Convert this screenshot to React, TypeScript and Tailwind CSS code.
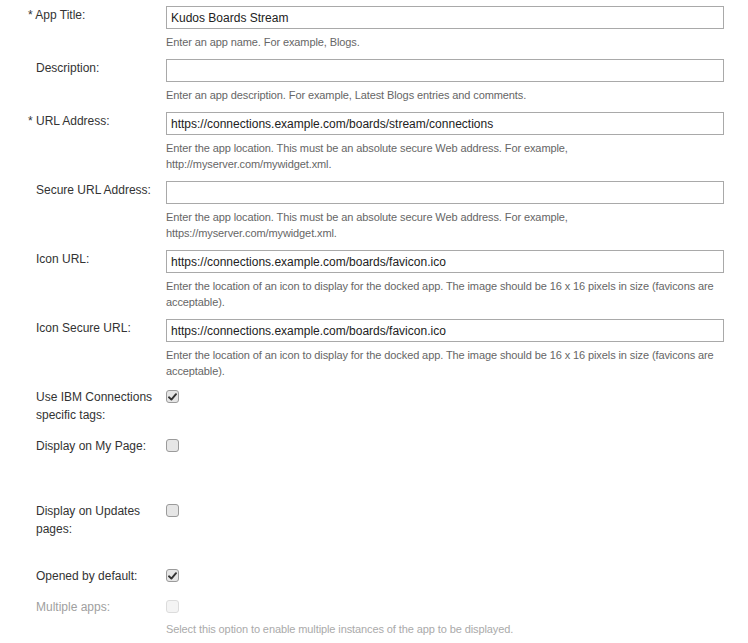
const font = "font-['Liberation_Sans',Arial,Helvetica,sans-serif]";

type Field = {
  label: string;
  required?: boolean;
  value: string;
  help: string[];
};

const fields: Field[] = [
  { label: 'App Title:', required: true, value: 'Kudos Boards Stream', help: ['Enter an app name. For example, Blogs.'] },
  { label: 'Description:', value: '', help: ['Enter an app description. For example, Latest Blogs entries and comments.'] },
  {
    label: 'URL Address:',
    required: true,
    value: 'https://connections.example.com/boards/stream/connections',
    help: ['Enter the app location. This must be an absolute secure Web address. For example,', 'http://myserver.com/mywidget.xml.'],
  },
  {
    label: 'Secure URL Address:',
    value: '',
    help: ['Enter the app location. This must be an absolute secure Web address. For example,', 'https://myserver.com/mywidget.xml.'],
  },
  {
    label: 'Icon URL:',
    value: 'https://connections.example.com/boards/favicon.ico',
    help: ['Enter the location of an icon to display for the docked app. The image should be 16 x 16 pixels in size (favicons are', 'acceptable).'],
  },
  {
    label: 'Icon Secure URL:',
    value: 'https://connections.example.com/boards/favicon.ico',
    help: ['Enter the location of an icon to display for the docked app. The image should be 16 x 16 pixels in size (favicons are', 'acceptable).'],
  },
];

function Checkbox({ checked, disabled }: { checked?: boolean; disabled?: boolean }) {
  return (
    <span
      className={
        disabled
          ? 'mt-[2px] flex h-[13px] w-[13px] items-center justify-center rounded-[3px] border border-[#dcdcdc] bg-[#f4f4f4]'
          : 'mt-[2px] flex h-[13px] w-[13px] items-center justify-center rounded-[3px] border border-[#9b9b9b] bg-[#e6e6e6]'
      }
    >
      {checked && (
        <svg width="9" height="8" viewBox="0 0 9 8">
          <path d="M1 4.3 L3.4 6.6 L8 1.2" fill="none" stroke="#333" strokeWidth="1.9" strokeLinecap="round" strokeLinejoin="round" />
        </svg>
      )}
    </span>
  );
}

function Label({ text, required, muted }: { text: string; required?: boolean; muted?: boolean }) {
  return (
    <div className={`w-[166px] shrink-0 pl-[36px] pr-[12px] text-[12px] leading-[18px] ${muted ? 'text-[#a0a0a0]' : 'text-[#333]'}`}>
      {required && <span className="-ml-[8px]">* </span>}
      {text}
    </div>
  );
}

export default function App() {
  return (
    <div className={`${font} min-h-[643px] w-[748px] overflow-hidden bg-white pt-[6px]`}>
      {fields.map((f) => (
        <div key={f.label} className="mb-[9px] flex">
          <Label text={f.label} required={f.required} />
          <div className="w-[558px]">
            <input
              readOnly
              value={f.value}
              className="block h-[23px] w-[558px] border border-[#a9a9a9] bg-white px-[4px] text-[12px] text-[#222] outline-none"
            />
            <div className="mt-[5px] whitespace-nowrap text-[11px] leading-[16px] tracking-[-0.1px] text-[#666]">
              {f.help.map((line) => (
                <div key={line}>{line}</div>
              ))}
            </div>
          </div>
        </div>
      ))}

      <div className="mb-[13px] flex">
        <Label text="Use IBM Connections specific tags:" />
        <Checkbox checked />
      </div>
      <div className="mb-[47px] flex">
        <Label text="Display on My Page:" />
        <Checkbox />
      </div>
      <div className="mb-[29px] flex">
        <Label text="Display on Updates pages:" />
        <Checkbox />
      </div>
      <div className="mb-[13px] flex">
        <Label text="Opened by default:" />
        <Checkbox checked />
      </div>
      <div className="flex">
        <Label text="Multiple apps:" muted />
        <div>
          <Checkbox disabled />
          <div className="mt-[8px] whitespace-nowrap text-[11px] leading-[16px] tracking-[-0.1px] text-[#aaa]">
            Select this option to enable multiple instances of the app to be displayed.
          </div>
        </div>
      </div>
    </div>
  );
}
